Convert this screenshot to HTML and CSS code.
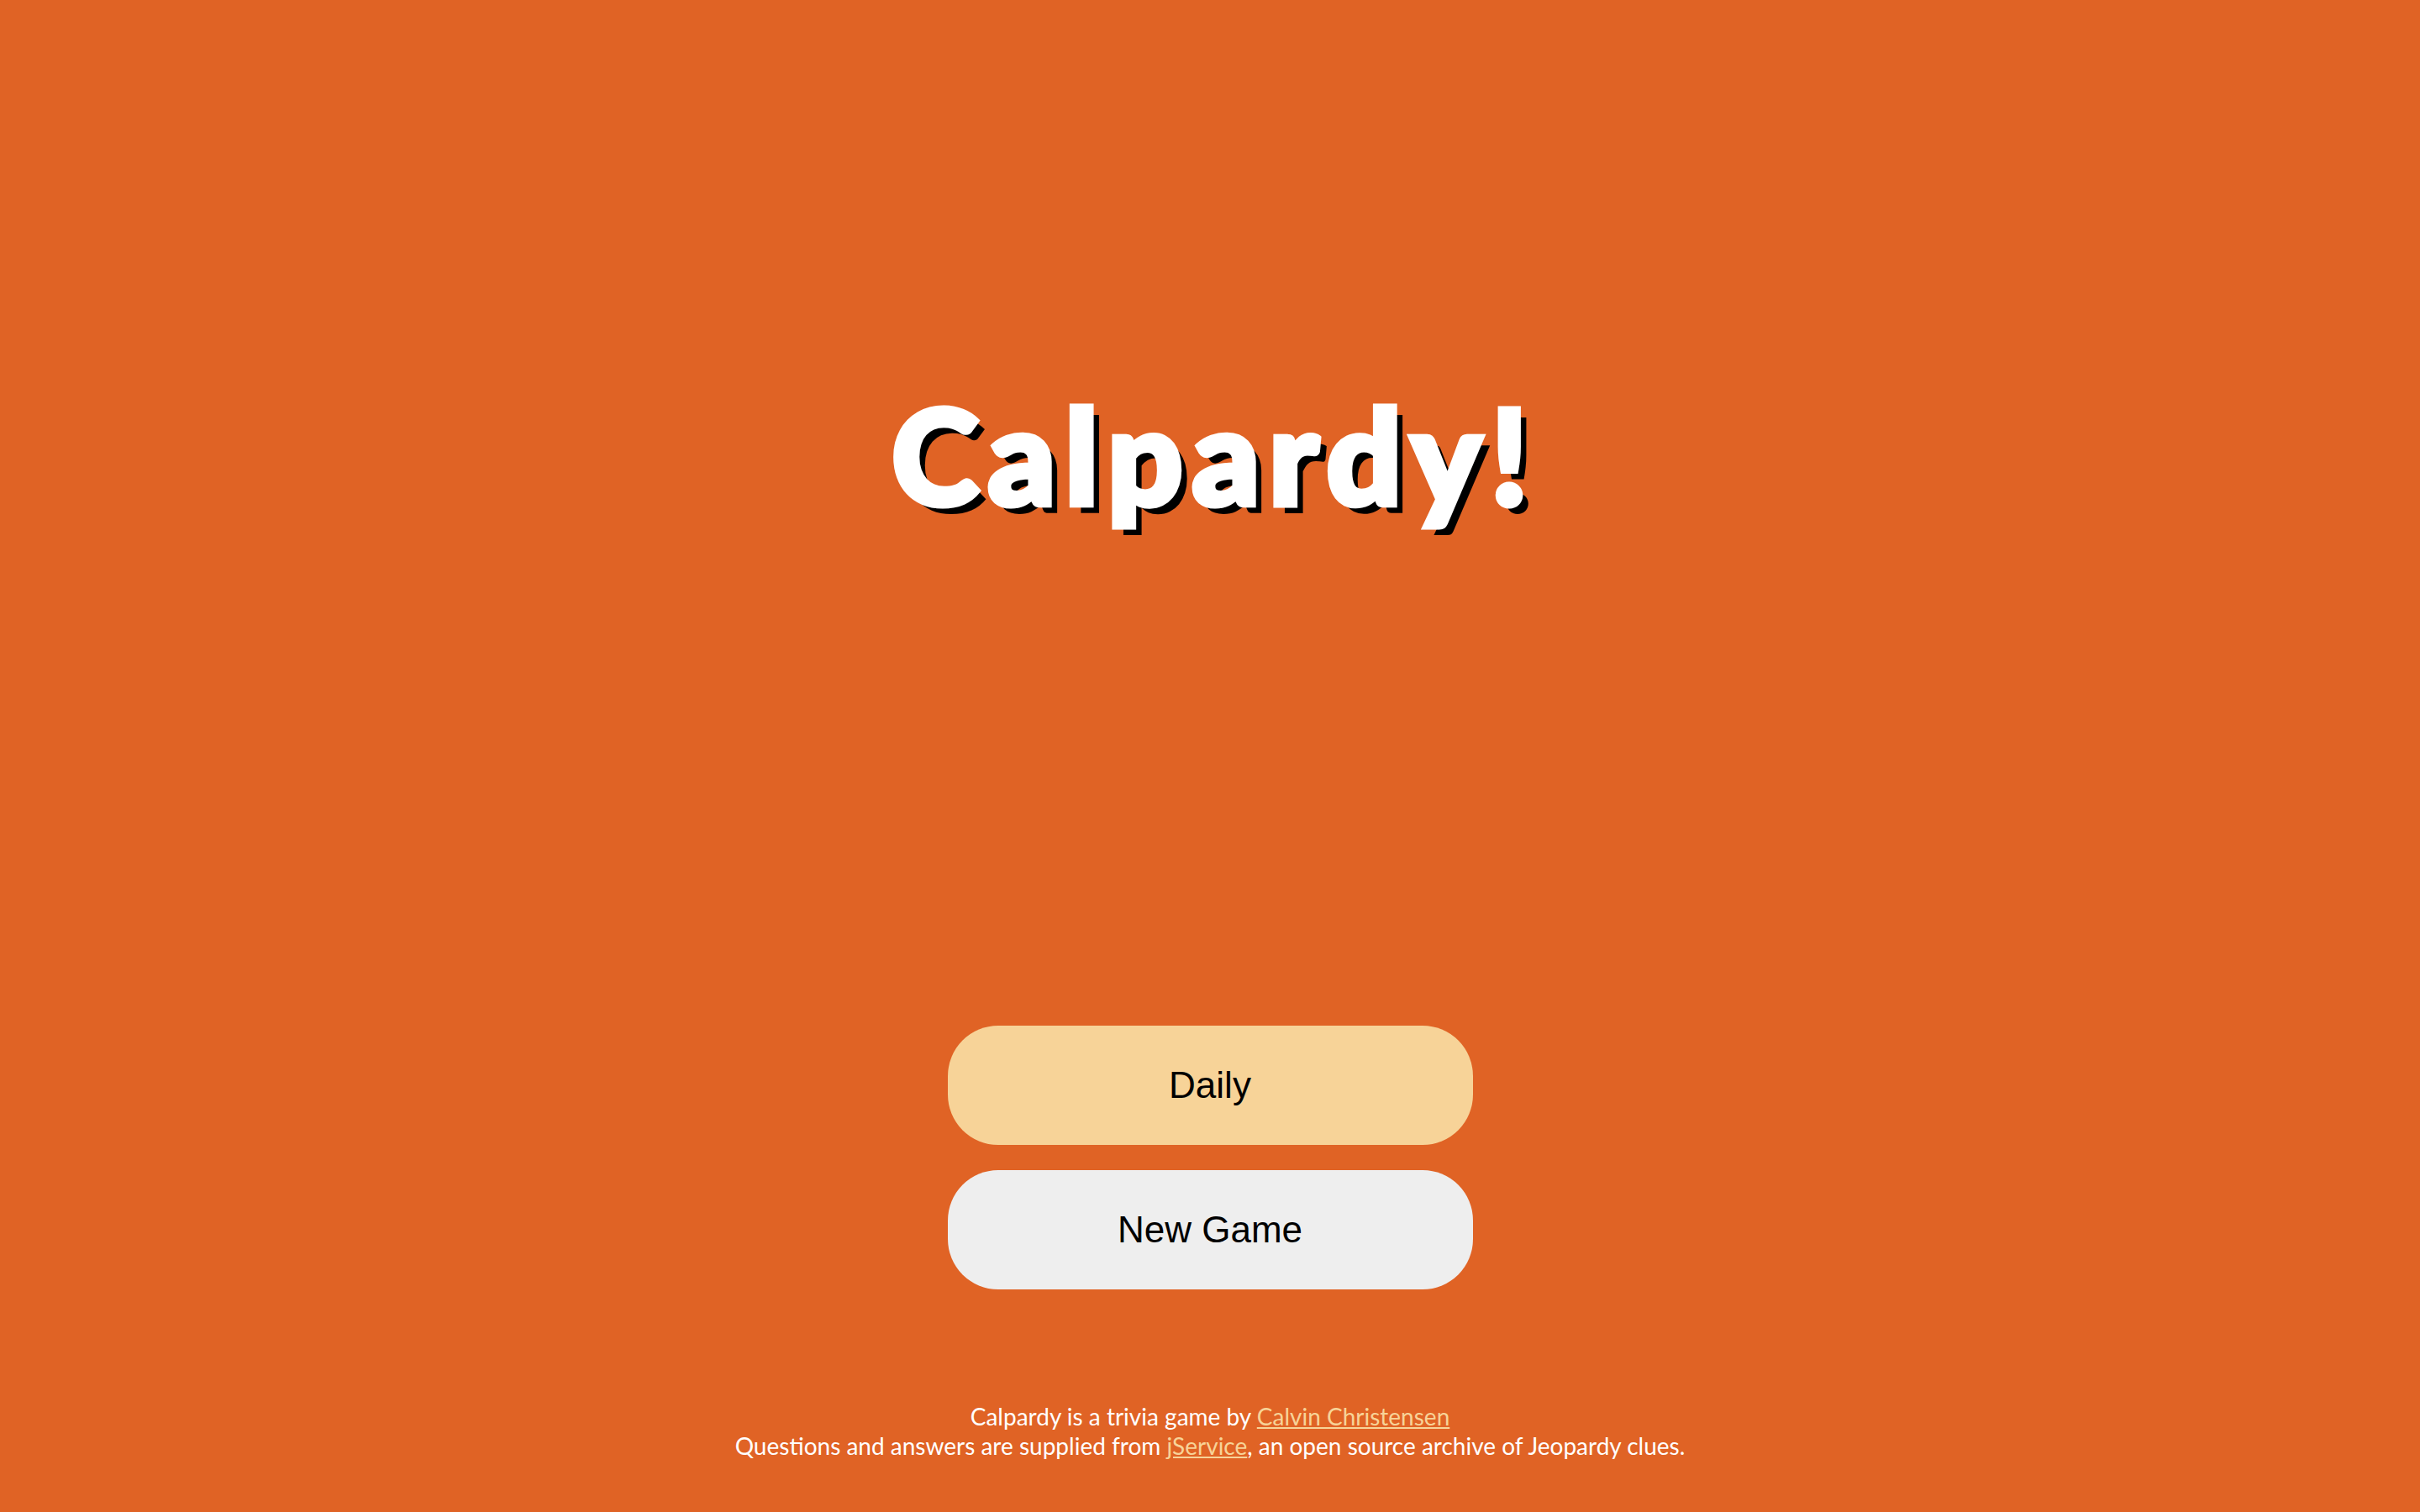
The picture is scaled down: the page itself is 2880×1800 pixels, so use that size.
FILE: index.html
```html
<!DOCTYPE html>
<html lang="en">
<head>
<meta charset="utf-8">
<title>Calpardy!</title>
<link rel="stylesheet" href="styles.css">
</head>
<body>
<div class="page">
  <h1 class="title">Calpardy!</h1>
  <div class="actions">
    <button class="btn btn-daily">Daily</button>
    <button class="btn btn-new">New Game</button>
  </div>
  <footer class="footer">
    <p>Calpardy is a trivia game by <a href="#">Calvin Christensen</a></p>
    <p>Questions and answers are supplied from <a href="#">jService</a>, an open source archive of Jeopardy clues.</p>
  </footer>
</div>
</body>
</html>
```

FILE: styles.css
```css
html, body {
  margin: 0;
  padding: 0;
  height: 100%;
}
body {
  background: #e06325;
  font-family: "Lato", "Open Sans", sans-serif;
  color: #fff;
}
.page {
  height: 100vh;
  display: flex;
  flex-direction: column;
  align-items: center;
}
.title {
  margin: 462px 0 0;
  padding-left: 11px;
  font-family: "Lato", sans-serif;
  font-weight: 900;
  font-size: 157px;
  line-height: 1;
  letter-spacing: 11px;
  color: #fff;
  -webkit-text-stroke: 7px #fff;
  text-shadow: 10px 10px 0 #000;
}
.actions {
  margin-top: 602px;
  display: flex;
  flex-direction: column;
  gap: 30px;
}
.btn {
  width: 625px;
  height: 142px;
  border: none;
  border-radius: 60px;
  font-family: "Liberation Sans", Arial, sans-serif;
  font-size: 44px;
  color: #000;
  cursor: pointer;
}
.btn-daily {
  background: #f7d398;
}
.btn-new {
  background: #eeeeee;
}
.footer {
  margin-top: auto;
  padding-bottom: 61px;
  text-align: center;
  font-size: 28px;
  line-height: 35px;
}
.footer p {
  margin: 0;
}
.footer a {
  color: #f7d398;
  text-decoration: underline;
}
```
